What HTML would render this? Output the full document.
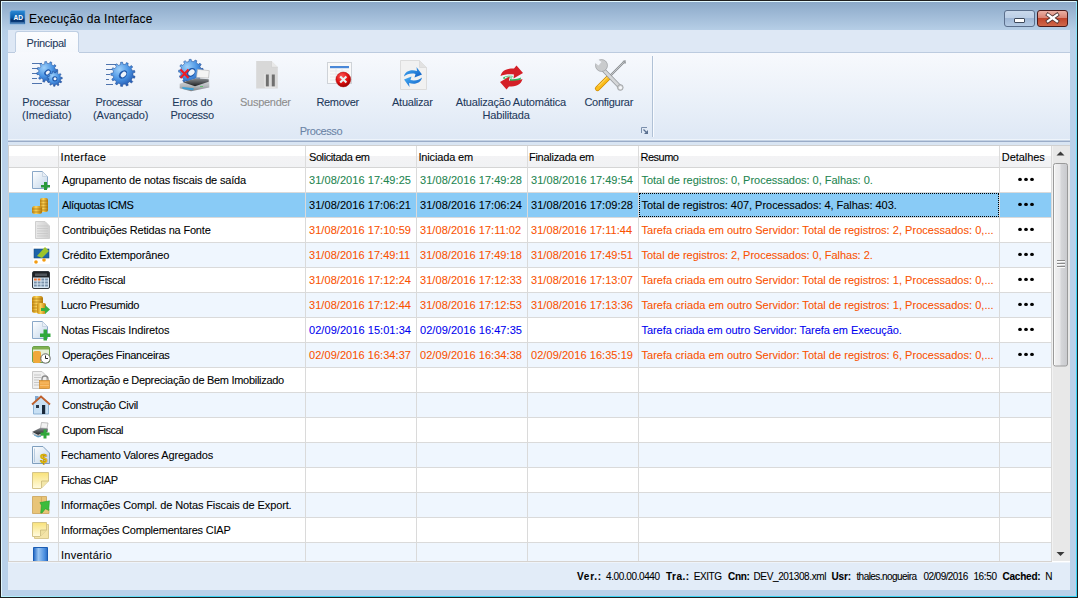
<!DOCTYPE html>
<html><head><meta charset="utf-8"><title>Execução da Interface</title>
<style>
*{margin:0;padding:0;box-sizing:border-box}
html,body{width:1078px;height:598px;overflow:hidden;background:#b9d1ea}
body{position:relative;font-family:"Liberation Sans",sans-serif;font-size:11px;color:#000}
.a{position:absolute}
.t{position:absolute;white-space:nowrap;line-height:13px;-webkit-text-stroke:0.08px currentColor}
svg.ov{position:absolute;left:0;top:0}
</style></head><body>
<div class="a" style="left:0px;top:0px;width:1078px;height:598px;background:#1f1f1f"></div>
<div class="a" style="left:1px;top:1px;width:1076px;height:596px;background:#e2f8ff"></div>
<div class="a" style="left:1076px;top:1px;width:1px;height:596px;background:linear-gradient(#8fe6fb,#38d4f4 300px)"></div>
<div class="a" style="left:1px;top:596px;width:1076px;height:1px;background:linear-gradient(90deg,#b8f4ff,#3ad2f2 200px)"></div>
<div class="a" style="left:2px;top:2px;width:1074px;height:594px;background:linear-gradient(#8ca9c9 0px,#b6cee6 28px,#b9d1ea 40px,#b9d1ea 598px)"></div>
<div class="t" style="left:29px;top:13px;letter-spacing:0.2px;font-size:12px;color:#000">Execução da Interface</div>
<div class="a" style="left:1004px;top:10px;width:31px;height:17px;border:1px solid #5b6f8c;border-radius:3px;background:linear-gradient(#c9d9ec 0,#bccfe6 45%,#9fb7d6 50%,#b4cae3 100%)"></div>
<div class="a" style="left:1014px;top:18px;width:11px;height:5px;background:#fff;border:1px solid #3e4a5c;border-radius:1px"></div>
<div class="a" style="left:1037px;top:10px;width:31px;height:17px;border:1px solid #4a1a1a;border-radius:3px;background:linear-gradient(#eab0a4 0,#d98474 45%,#c0452c 50%,#d0684a 100%)"></div>
<div class="a" style="left:8px;top:30px;width:1062px;height:22px;background:#dee8f5"></div>
<div class="a" style="left:15px;top:31px;width:64px;height:22px;background:linear-gradient(#fbfcfe,#f5f8fc);border:1px solid #bfcfe3;border-bottom:none;border-radius:3px 3px 0 0"></div>
<div class="t" style="left:26.5px;top:37px;letter-spacing:-0.312px;color:#1e395b">Principal</div>
<div class="a" style="left:8px;top:52px;width:1062px;height:88px;background:linear-gradient(#f7f9fd 0%,#eef3fa 40%,#dee8f5 100%)"></div>
<div class="a" style="left:8px;top:52px;width:7px;height:1px;background:#bccbdf"></div>
<div class="a" style="left:79px;top:52px;width:991px;height:1px;background:#bccbdf"></div>
<div class="a" style="left:8px;top:139px;width:1062px;height:1px;background:#eef4fb"></div>
<div class="a" style="left:8px;top:140px;width:1062px;height:1px;background:#c4d2e4"></div>
<div class="a" style="left:8px;top:141px;width:1062px;height:1px;background:#9aacc8"></div>
<div class="a" style="left:8px;top:142px;width:1062px;height:3px;background:#d9e5f3"></div>
<div class="a" style="left:652px;top:56px;width:1px;height:81px;background:#b0c1d6"></div>
<div class="a" style="left:653px;top:56px;width:1px;height:81px;background:#f8fbff"></div>
<div class="t" style="left:22.3px;top:96px;letter-spacing:-0.25px;color:#1e395b">Processar</div>
<div class="t" style="left:22.1px;top:109px;letter-spacing:0.0px;color:#1e395b">(Imediato)</div>
<div class="t" style="left:95.6px;top:96px;letter-spacing:-0.325px;color:#1e395b">Processar</div>
<div class="t" style="left:93px;top:109px;letter-spacing:-0.067px;color:#1e395b">(Avançado)</div>
<div class="t" style="left:172.3px;top:96px;letter-spacing:-0.186px;color:#1e395b">Erros do</div>
<div class="t" style="left:170.5px;top:109px;letter-spacing:-0.329px;color:#1e395b">Processo</div>
<div class="t" style="left:240px;top:96px;letter-spacing:-0.275px;color:#8d8d8d">Suspender</div>
<div class="t" style="left:316.4px;top:96px;letter-spacing:-0.3px;color:#1e395b">Remover</div>
<div class="t" style="left:392px;top:96px;letter-spacing:-0.25px;color:#1e395b">Atualizar</div>
<div class="t" style="left:455.8px;top:96px;letter-spacing:-0.19px;color:#1e395b">Atualização Automática</div>
<div class="t" style="left:482.5px;top:109px;letter-spacing:-0.178px;color:#1e395b">Habilitada</div>
<div class="t" style="left:584.4px;top:96px;letter-spacing:-0.267px;color:#1e395b">Configurar</div>
<div class="t" style="left:299.7px;top:125px;letter-spacing:-0.429px;color:#6b84a6">Processo</div>
<div class="a" style="left:8px;top:145px;width:1062px;height:417px;background:#fff"></div>
<div class="a" style="left:8px;top:145px;width:1062px;height:1px;background:#d0d0d0"></div>
<div class="a" style="left:8px;top:145px;width:1px;height:417px;background:#d0d0d0"></div>
<div class="a" style="left:9px;top:146px;width:1043px;height:21px;background:linear-gradient(#ffffff 0,#ffffff 10px,#f3f3f5 10px,#f1f2f4 21px)"></div>
<div class="a" style="left:9px;top:167px;width:1043px;height:1px;background:#d5d5d5"></div>
<div class="a" style="left:58px;top:146px;width:1px;height:21px;background:#dcdcdc"></div>
<div class="t" style="left:60.5px;top:151px;letter-spacing:0.325px;">Interface</div>
<div class="a" style="left:305px;top:146px;width:1px;height:21px;background:#dcdcdc"></div>
<div class="t" style="left:309px;top:151px;letter-spacing:-0.417px;">Solicitada em</div>
<div class="a" style="left:416px;top:146px;width:1px;height:21px;background:#dcdcdc"></div>
<div class="t" style="left:418.4px;top:151px;letter-spacing:-0.14px;">Iniciada em</div>
<div class="a" style="left:527px;top:146px;width:1px;height:21px;background:#dcdcdc"></div>
<div class="t" style="left:529px;top:151px;letter-spacing:-0.275px;">Finalizada em</div>
<div class="a" style="left:638px;top:146px;width:1px;height:21px;background:#dcdcdc"></div>
<div class="t" style="left:640.6px;top:151px;letter-spacing:-0.52px;">Resumo</div>
<div class="a" style="left:999px;top:146px;width:1px;height:21px;background:#dcdcdc"></div>
<div class="t" style="left:1001.8px;top:151px;letter-spacing:-0.057px;">Detalhes</div>
<div class="a" style="left:9px;top:168px;width:1042px;height:24px;background:#ffffff"></div>
<div class="a" style="left:9px;top:192px;width:1042px;height:1px;background:#dadada"></div>
<div class="t" style="left:62px;top:174px;letter-spacing:-0.167px;">Agrupamento de notas fiscais de saída</div>
<div class="t" style="left:309px;top:174px;letter-spacing:0.056px;color:#238550">31/08/2016 17:49:25</div>
<div class="t" style="left:420px;top:174px;letter-spacing:0.056px;color:#238550">31/08/2016 17:49:28</div>
<div class="t" style="left:531px;top:174px;letter-spacing:0.056px;color:#238550">31/08/2016 17:49:54</div>
<div class="t" style="left:641.5px;top:174px;letter-spacing:-0.021px;color:#238550">Total de registros: 0, Processados: 0, Falhas: 0.</div>
<div class="a" style="left:9px;top:193px;width:1042px;height:24px;background:#89cbf6"></div>
<div class="a" style="left:9px;top:217px;width:1042px;height:1px;background:#dadada"></div>
<div class="t" style="left:62px;top:199px;letter-spacing:-0.346px;">Alíquotas ICMS</div>
<div class="t" style="left:309px;top:199px;letter-spacing:0.056px;color:#000">31/08/2016 17:06:21</div>
<div class="t" style="left:420px;top:199px;letter-spacing:0.056px;color:#000">31/08/2016 17:06:24</div>
<div class="t" style="left:531px;top:199px;letter-spacing:0.056px;color:#000">31/08/2016 17:09:28</div>
<div class="t" style="left:641.5px;top:199px;letter-spacing:-0.029px;color:#000">Total de registros: 407, Processados: 4, Falhas: 403.</div>
<div class="a" style="left:9px;top:218px;width:1042px;height:24px;background:#ffffff"></div>
<div class="a" style="left:9px;top:242px;width:1042px;height:1px;background:#dadada"></div>
<div class="t" style="left:62px;top:224px;letter-spacing:-0.183px;">Contribuições Retidas na Fonte</div>
<div class="t" style="left:309px;top:224px;letter-spacing:0.056px;color:#fa5200">31/08/2016 17:10:59</div>
<div class="t" style="left:420px;top:224px;letter-spacing:0.056px;color:#fa5200">31/08/2016 17:11:02</div>
<div class="t" style="left:531px;top:224px;letter-spacing:0.056px;color:#fa5200">31/08/2016 17:11:44</div>
<div class="t" style="left:641.5px;top:224px;letter-spacing:0.027px;color:#fa5200">Tarefa criada em outro Servidor: Total de registros: 2, Processados: 0,...</div>
<div class="a" style="left:9px;top:243px;width:1042px;height:24px;background:#eff6fe"></div>
<div class="a" style="left:9px;top:267px;width:1042px;height:1px;background:#dadada"></div>
<div class="t" style="left:62px;top:249px;letter-spacing:-0.147px;">Crédito Extemporâneo</div>
<div class="t" style="left:309px;top:249px;letter-spacing:0.056px;color:#fa5200">31/08/2016 17:49:11</div>
<div class="t" style="left:420px;top:249px;letter-spacing:0.056px;color:#fa5200">31/08/2016 17:49:18</div>
<div class="t" style="left:531px;top:249px;letter-spacing:0.056px;color:#fa5200">31/08/2016 17:49:51</div>
<div class="t" style="left:641.5px;top:249px;letter-spacing:-0.021px;color:#fa5200">Total de registros: 2, Processados: 0, Falhas: 2.</div>
<div class="a" style="left:9px;top:268px;width:1042px;height:24px;background:#ffffff"></div>
<div class="a" style="left:9px;top:292px;width:1042px;height:1px;background:#dadada"></div>
<div class="t" style="left:62px;top:274px;letter-spacing:-0.285px;">Crédito Fiscal</div>
<div class="t" style="left:309px;top:274px;letter-spacing:0.056px;color:#fa5200">31/08/2016 17:12:24</div>
<div class="t" style="left:420px;top:274px;letter-spacing:0.056px;color:#fa5200">31/08/2016 17:12:33</div>
<div class="t" style="left:531px;top:274px;letter-spacing:0.056px;color:#fa5200">31/08/2016 17:13:07</div>
<div class="t" style="left:641.5px;top:274px;letter-spacing:0.027px;color:#fa5200">Tarefa criada em outro Servidor: Total de registros: 1, Processados: 0,...</div>
<div class="a" style="left:9px;top:293px;width:1042px;height:24px;background:#eff6fe"></div>
<div class="a" style="left:9px;top:317px;width:1042px;height:1px;background:#dadada"></div>
<div class="t" style="left:61px;top:299px;letter-spacing:-0.336px;">Lucro Presumido</div>
<div class="t" style="left:309px;top:299px;letter-spacing:0.056px;color:#fa5200">31/08/2016 17:12:44</div>
<div class="t" style="left:420px;top:299px;letter-spacing:0.056px;color:#fa5200">31/08/2016 17:12:53</div>
<div class="t" style="left:531px;top:299px;letter-spacing:0.056px;color:#fa5200">31/08/2016 17:13:36</div>
<div class="t" style="left:641.5px;top:299px;letter-spacing:0.027px;color:#fa5200">Tarefa criada em outro Servidor: Total de registros: 1, Processados: 0,...</div>
<div class="a" style="left:9px;top:318px;width:1042px;height:24px;background:#ffffff"></div>
<div class="a" style="left:9px;top:342px;width:1042px;height:1px;background:#dadada"></div>
<div class="t" style="left:61px;top:324px;letter-spacing:-0.127px;">Notas Fiscais Indiretos</div>
<div class="t" style="left:309px;top:324px;letter-spacing:0.056px;color:#0000f0">02/09/2016 15:01:34</div>
<div class="t" style="left:420px;top:324px;letter-spacing:0.056px;color:#0000f0">02/09/2016 16:47:35</div>
<div class="t" style="left:641.5px;top:324px;letter-spacing:-0.059px;color:#0000f0">Tarefa criada em outro Servidor: Tarefa em Execução.</div>
<div class="a" style="left:9px;top:343px;width:1042px;height:24px;background:#eff6fe"></div>
<div class="a" style="left:9px;top:367px;width:1042px;height:1px;background:#dadada"></div>
<div class="t" style="left:62px;top:349px;letter-spacing:-0.3px;">Operações Financeiras</div>
<div class="t" style="left:309px;top:349px;letter-spacing:0.056px;color:#fa5200">02/09/2016 16:34:37</div>
<div class="t" style="left:420px;top:349px;letter-spacing:0.056px;color:#fa5200">02/09/2016 16:34:38</div>
<div class="t" style="left:531px;top:349px;letter-spacing:0.056px;color:#fa5200">02/09/2016 16:35:19</div>
<div class="t" style="left:641.5px;top:349px;letter-spacing:0.027px;color:#fa5200">Tarefa criada em outro Servidor: Total de registros: 6, Processados: 0,...</div>
<div class="a" style="left:9px;top:368px;width:1042px;height:24px;background:#ffffff"></div>
<div class="a" style="left:9px;top:392px;width:1042px;height:1px;background:#dadada"></div>
<div class="t" style="left:62px;top:374px;letter-spacing:-0.293px;">Amortização e Depreciação de Bem Imobilizado</div>
<div class="a" style="left:9px;top:393px;width:1042px;height:24px;background:#eff6fe"></div>
<div class="a" style="left:9px;top:417px;width:1042px;height:1px;background:#dadada"></div>
<div class="t" style="left:62px;top:399px;letter-spacing:-0.253px;">Construção Civil</div>
<div class="a" style="left:9px;top:418px;width:1042px;height:24px;background:#ffffff"></div>
<div class="a" style="left:9px;top:442px;width:1042px;height:1px;background:#dadada"></div>
<div class="t" style="left:62px;top:424px;letter-spacing:-0.518px;">Cupom Fiscal</div>
<div class="a" style="left:9px;top:443px;width:1042px;height:24px;background:#eff6fe"></div>
<div class="a" style="left:9px;top:467px;width:1042px;height:1px;background:#dadada"></div>
<div class="t" style="left:61px;top:449px;letter-spacing:-0.152px;">Fechamento Valores Agregados</div>
<div class="a" style="left:9px;top:468px;width:1042px;height:24px;background:#ffffff"></div>
<div class="a" style="left:9px;top:492px;width:1042px;height:1px;background:#dadada"></div>
<div class="t" style="left:61px;top:474px;letter-spacing:-0.41px;">Fichas CIAP</div>
<div class="a" style="left:9px;top:493px;width:1042px;height:24px;background:#eff6fe"></div>
<div class="a" style="left:9px;top:517px;width:1042px;height:1px;background:#dadada"></div>
<div class="t" style="left:61px;top:499px;letter-spacing:-0.118px;">Informações Compl. de Notas Fiscais de Export.</div>
<div class="a" style="left:9px;top:518px;width:1042px;height:24px;background:#ffffff"></div>
<div class="a" style="left:9px;top:542px;width:1042px;height:1px;background:#dadada"></div>
<div class="t" style="left:61px;top:524px;letter-spacing:-0.21px;">Informações Complementares CIAP</div>
<div class="a" style="left:9px;top:543px;width:1042px;height:18px;background:#eff6fe"></div>
<div class="t" style="left:61px;top:549px;letter-spacing:0.278px;">Inventário</div>
<div class="a" style="left:58px;top:167px;width:1px;height:394px;background:#dadada"></div>
<div class="a" style="left:305px;top:167px;width:1px;height:394px;background:#dadada"></div>
<div class="a" style="left:416px;top:167px;width:1px;height:394px;background:#dadada"></div>
<div class="a" style="left:527px;top:167px;width:1px;height:394px;background:#dadada"></div>
<div class="a" style="left:638px;top:167px;width:1px;height:394px;background:#dadada"></div>
<div class="a" style="left:999px;top:167px;width:1px;height:394px;background:#dadada"></div>
<div class="a" style="left:1051px;top:146px;width:1px;height:415px;background:#dadada"></div>
<div class="a" style="left:639px;top:193px;width:360px;height:24px;border:1px dotted #000"></div>
<div class="a" style="left:8px;top:561px;width:1044px;height:1px;background:#d6d2ce"></div>
<div class="a" style="left:8px;top:562px;width:1062px;height:28px;background:#e2ecf8"></div>
<div class="a" style="left:8px;top:562px;width:1062px;height:1px;background:#eef4fb"></div>
<div class="t" style="left:577px;top:570px;letter-spacing:0.75px;font-size:10px;font-weight:bold;">Ver.:</div>
<div class="t" style="left:606px;top:570px;letter-spacing:-0.391px;font-size:10px;">4.00.00.0440</div>
<div class="t" style="left:666px;top:570px;letter-spacing:0.5px;font-size:10px;font-weight:bold;">Tra.:</div>
<div class="t" style="left:693.7px;top:570px;letter-spacing:-0.425px;font-size:10px;">EXITG</div>
<div class="t" style="left:728px;top:570px;letter-spacing:-0.333px;font-size:10px;font-weight:bold;">Cnn:</div>
<div class="t" style="left:753.5px;top:570px;letter-spacing:-0.369px;font-size:10px;">DEV_201308.xml</div>
<div class="t" style="left:831.5px;top:570px;letter-spacing:-0.167px;font-size:10px;font-weight:bold;">Usr:</div>
<div class="t" style="left:856.4px;top:570px;letter-spacing:-0.55px;font-size:10px;">thales.nogueira</div>
<div class="t" style="left:923.4px;top:570px;letter-spacing:-0.556px;font-size:10px;">02/09/2016</div>
<div class="t" style="left:973.4px;top:570px;letter-spacing:-0.35px;font-size:10px;">16:50</div>
<div class="t" style="left:1002.4px;top:570px;letter-spacing:-0.2px;font-size:10px;font-weight:bold;">Cached:</div>
<div class="t" style="left:1045.2px;top:570px;letter-spacing:0.4px;font-size:10px;">N</div>
<svg class="ov" width="1078" height="598" viewBox="0 0 1078 598">
<defs>
<radialGradient id="gb" cx=".35" cy=".3" r=".8"><stop offset="0" stop-color="#9ed0fa"/><stop offset=".5" stop-color="#4a94e4"/><stop offset="1" stop-color="#1c4ca4"/></radialGradient>
<linearGradient id="prn" x1="0" y1="0" x2="0" y2="1"><stop offset="0" stop-color="#5a5e62"/><stop offset=".45" stop-color="#1f2225"/><stop offset=".5" stop-color="#c9cdd0"/><stop offset="1" stop-color="#8d9296"/></linearGradient>
<radialGradient id="redc" cx=".4" cy=".3" r=".7"><stop offset="0" stop-color="#ff5a5a"/><stop offset=".6" stop-color="#e01010"/><stop offset="1" stop-color="#9a0000"/></radialGradient>
<linearGradient id="blu" x1="0" y1="0" x2="1" y2="1"><stop offset="0" stop-color="#4ab0f5"/><stop offset="1" stop-color="#0c5cc4"/></linearGradient>
<linearGradient id="docg" x1="0" y1="0" x2="1" y2="1"><stop offset="0" stop-color="#ffffff"/><stop offset="1" stop-color="#c2d6ea"/></linearGradient>
<linearGradient id="bookg" x1="0" y1="0" x2="1" y2="0"><stop offset="0" stop-color="#1f66c4"/><stop offset=".35" stop-color="#9cc6f2"/><stop offset=".8" stop-color="#4a8ee0"/><stop offset="1" stop-color="#2a6ac0"/></linearGradient>
<linearGradient id="coin" x1="0" y1="0" x2="1" y2="0"><stop offset="0" stop-color="#c88a10"/><stop offset=".4" stop-color="#fbd45a"/><stop offset="1" stop-color="#b87a08"/></linearGradient>
<linearGradient id="note" x1="0" y1="0" x2="0" y2="1"><stop offset="0" stop-color="#f9e27a"/><stop offset="1" stop-color="#fffbe0"/></linearGradient>
<linearGradient id="shd" x1="0" y1="0" x2="1" y2="0"><stop offset="0" stop-color="#e9e9e9"/><stop offset="1" stop-color="#cfcfcf"/></linearGradient>
<linearGradient id="thumb" x1="0" y1="0" x2="1" y2="0"><stop offset="0" stop-color="#f2f2f2"/><stop offset=".48" stop-color="#e8e8ea"/><stop offset=".52" stop-color="#d6d7da"/><stop offset="1" stop-color="#c8c9cd"/></linearGradient>
<linearGradient id="prtop" x1="0" y1="0" x2="0" y2="1"><stop offset="0" stop-color="#8a8e92"/><stop offset="1" stop-color="#1c1e20"/></linearGradient>
<linearGradient id="prbase" x1="0" y1="0" x2="0" y2="1"><stop offset="0" stop-color="#e4e6e8"/><stop offset=".6" stop-color="#b4b8bc"/><stop offset="1" stop-color="#7c8084"/></linearGradient>
</defs>
<clipPath id="gridclip"><rect x="9" y="168" width="1042" height="393"/></clipPath>
<defs><linearGradient id="adg" x1="0" y1="0" x2="0" y2="1"><stop offset="0" stop-color="#2a8ad6"/><stop offset=".55" stop-color="#0a5aa8"/><stop offset=".7" stop-color="#05306a"/><stop offset="1" stop-color="#0a4a90"/></linearGradient></defs>
<path d="M11.5 10.5H25V24H10V12Z" fill="url(#adg)" stroke="#6aa8e0" stroke-width=".6"/>
<text x="13.5" y="20" font-family="Liberation Sans" font-weight="bold" font-size="7.5" textLength="9.5" lengthAdjust="spacingAndGlyphs" fill="#fff">AD</text>
<path d="M10.5 23H24" stroke="#8ab4dc" stroke-width=".8"/>
<path d="M1048 14.8L1057 21.2M1057 14.8L1048 21.2" stroke="#4a3030" stroke-width="3.9" stroke-linecap="square"/>
<path d="M1048 14.8L1057 21.2M1057 14.8L1048 21.2" stroke="#fff" stroke-width="2.4" stroke-linecap="square"/>
<path d="M32 63.5H42" stroke="#4f74ae" stroke-width="1"/>
<path d="M32 68.5H38" stroke="#4f74ae" stroke-width="1"/>
<path d="M32 73.5H37" stroke="#4f74ae" stroke-width="1"/>
<path d="M32 78.5H37" stroke="#4f74ae" stroke-width="1"/>
<path d="M32 83.5H42" stroke="#4f74ae" stroke-width="1"/>
<path d="M55.86 72.86 L55.67 73.97 L57.51 74.86 L56.84 76.62 L54.88 76.07 L54.28 77.02 L53.57 77.89 L54.71 79.58 L53.25 80.77 L51.83 79.31 L50.83 79.84 L49.78 80.23 L49.93 82.27 L48.07 82.57 L47.57 80.60 L46.44 80.56 L45.33 80.37 L44.44 82.21 L42.68 81.54 L43.23 79.58 L42.28 78.98 L41.41 78.27 L39.72 79.41 L38.53 77.95 L39.99 76.53 L39.46 75.53 L39.07 74.48 L37.03 74.63 L36.73 72.77 L38.70 72.27 L38.74 71.14 L38.93 70.03 L37.09 69.14 L37.76 67.38 L39.72 67.93 L40.32 66.98 L41.03 66.11 L39.89 64.42 L41.35 63.23 L42.77 64.69 L43.77 64.16 L44.82 63.77 L44.67 61.73 L46.53 61.43 L47.03 63.40 L48.16 63.44 L49.27 63.63 L50.16 61.79 L51.92 62.46 L51.37 64.42 L52.32 65.02 L53.19 65.73 L54.88 64.59 L56.07 66.05 L54.61 67.47 L55.14 68.47 L55.53 69.52 L57.57 69.37 L57.87 71.23 L55.90 71.73Z" fill="url(#gb)" stroke="#1b4690" stroke-width=".5"/>
<ellipse cx="47.5" cy="72.5" rx="3.6" ry="2.6" fill="#1d55a8" transform="rotate(-40 47.5 72.5)"/>
<ellipse cx="47.8" cy="72.5" rx="2.4" ry="1.6" fill="#eef4fb" transform="rotate(-40 47.8 72.5)"/>
<path d="M60.58 79.89 L60.35 80.72 L61.73 81.58 L61.05 82.88 L59.55 82.23 L59.00 82.88 L58.36 83.45 L59.06 84.92 L57.78 85.65 L56.88 84.29 L56.06 84.54 L55.21 84.68 L55.00 86.29 L53.53 86.21 L53.51 84.58 L52.68 84.35 L51.90 84.01 L50.85 85.25 L49.66 84.39 L50.52 83.00 L49.95 82.36 L49.48 81.65 L47.92 82.13 L47.38 80.76 L48.86 80.06 L48.72 79.21 L48.71 78.36 L47.14 77.92 L47.43 76.48 L49.05 76.68 L49.39 75.90 L49.85 75.17 L48.76 73.96 L49.79 72.90 L51.04 73.95 L51.75 73.48 L52.52 73.11 L52.27 71.50 L53.71 71.17 L54.19 72.72 L55.04 72.71 L55.89 72.82 L56.55 71.33 L57.94 71.82 L57.50 73.39 L58.23 73.85 L58.88 74.40 L60.24 73.50 L61.14 74.66 L59.92 75.75 L60.29 76.52 L60.54 77.34 L62.17 77.32 L62.30 78.79 L60.69 79.04Z" fill="url(#gb)" stroke="#1b4690" stroke-width=".5"/>
<circle cx="54.8" cy="78.8" r="2.6" fill="#1d55a8"/><circle cx="55" cy="78.8" r="1.5" fill="#eef4fb"/>
<path d="M106 64.5H117" stroke="#4f74ae" stroke-width="1"/>
<path d="M106 69.5H113" stroke="#4f74ae" stroke-width="1"/>
<path d="M106 74.5H110" stroke="#4f74ae" stroke-width="1"/>
<path d="M106 79.5H109" stroke="#4f74ae" stroke-width="1"/>
<path d="M106 84.5H113" stroke="#4f74ae" stroke-width="1"/>
<path d="M133.00 74.30 L132.93 75.51 L135.05 76.24 L134.57 78.18 L132.35 77.85 L131.85 78.95 L131.23 79.98 L132.76 81.61 L131.44 83.11 L129.63 81.79 L128.68 82.53 L127.65 83.15 L128.25 85.31 L126.38 86.02 L125.39 84.01 L124.21 84.23 L123.00 84.30 L122.53 86.49 L120.54 86.25 L120.61 84.01 L119.45 83.65 L118.35 83.15 L116.92 84.88 L115.27 83.74 L116.37 81.79 L115.51 80.93 L114.77 79.98 L112.70 80.84 L111.77 79.06 L113.65 77.85 L113.29 76.69 L113.07 75.51 L110.84 75.30 L110.84 73.30 L113.07 73.09 L113.29 71.91 L113.65 70.75 L111.77 69.54 L112.70 67.76 L114.77 68.62 L115.51 67.67 L116.37 66.81 L115.27 64.86 L116.92 63.72 L118.35 65.45 L119.45 64.95 L120.61 64.59 L120.54 62.35 L122.53 62.11 L123.00 64.30 L124.21 64.37 L125.39 64.59 L126.38 62.58 L128.25 63.29 L127.65 65.45 L128.68 66.07 L129.63 66.81 L131.44 65.49 L132.76 66.99 L131.23 68.62 L131.85 69.65 L132.35 70.75 L134.57 70.42 L135.05 72.36 L132.93 73.09Z" fill="url(#gb)" stroke="#1b4690" stroke-width=".5"/>
<ellipse cx="123" cy="74.5" rx="4.8" ry="3.4" fill="#1d55a8" transform="rotate(-45 123 74.5)"/>
<ellipse cx="123.5" cy="74.5" rx="3.2" ry="2.2" fill="#eef4fb" transform="rotate(-45 123.5 74.5)"/>
<path d="M201.39 72.22 L201.25 73.47 L203.13 74.28 L202.54 76.23 L200.53 75.87 L199.96 76.99 L199.25 78.03 L200.54 79.62 L199.12 81.07 L197.50 79.82 L196.47 80.54 L195.37 81.14 L195.77 83.15 L193.83 83.77 L192.98 81.91 L191.74 82.07 L190.48 82.09 L189.90 84.05 L187.90 83.71 L188.01 81.66 L186.83 81.23 L185.71 80.66 L184.29 82.13 L182.67 80.89 L183.72 79.13 L182.88 78.20 L182.16 77.17 L180.21 77.81 L179.36 75.97 L181.10 74.90 L180.79 73.68 L180.63 72.44 L178.61 72.10 L178.71 70.07 L180.75 69.93 L181.04 68.71 L181.47 67.53 L179.84 66.29 L180.88 64.54 L182.75 65.37 L183.57 64.42 L184.50 63.58 L183.63 61.73 L185.36 60.66 L186.63 62.26 L187.80 61.80 L189.02 61.49 L189.11 59.44 L191.14 59.30 L191.52 61.31 L192.77 61.45 L193.99 61.74 L195.02 59.97 L196.89 60.79 L196.29 62.74 L197.33 63.45 L198.28 64.27 L200.01 63.18 L201.28 64.77 L199.84 66.23 L200.44 67.33 L200.90 68.50 L202.94 68.35 L203.33 70.34 L201.37 70.96Z" fill="url(#gb)" stroke="#1b4690" stroke-width=".5"/>
<ellipse cx="191" cy="72.5" rx="5.2" ry="3.8" fill="#1d55a8" transform="rotate(-45 191 72.5)"/>
<ellipse cx="191.5" cy="72.5" rx="3.6" ry="2.6" fill="#eef4fb" transform="rotate(-45 191.5 72.5)"/>
<path d="M197.5 69.3L209.3 70.7L208.5 78L196.5 77.5Z" fill="#f4f4f4" stroke="#b0b0b0" stroke-width=".6"/>
<path d="M179.7 83.7L196 78.5L209.3 79.5V87.5L191 91.3L179.7 88.3Z" fill="url(#prbase)"/>
<path d="M183 82.3L196.3 78.3L208.7 79.3V81.7L195 86.3Z" fill="url(#prtop)"/>
<path d="M182 87L194 88.3L193 90.3L183 89Z" fill="#3aa0d8"/>
<path d="M200 86.5h3" stroke="#50c060" stroke-width=".8"/>
<path d="M180.5 69.5L188.5 78M188.5 69.5L180.5 78" stroke="#ee1c25" stroke-width="2.2"/>
<path d="M256.2 61H271.5L277.8 67.3V88.5H256.2Z" fill="#d8d8d8"/>
<path d="M271.5 61V67.3H277.8" fill="#e9e9e9" stroke="#cdcdcd" stroke-width=".6"/>
<rect x="265.8" y="74.5" width="3" height="12" fill="#6f6f6f"/><rect x="271.8" y="74.5" width="3" height="12" fill="#6f6f6f"/>
<path d="M265 74v13.2h10.5" stroke="#f2f2f2" stroke-width=".8" fill="none"/>
<rect x="327.5" y="62.5" width="24" height="21" fill="#f9f9f9" stroke="#cfd3d8"/>
<rect x="330" y="66" width="19" height="2.2" fill="#4a88d8"/>
<path d="M330 71h19M330 74h19M330 77h19M330 80h19M336 68v14M342 68v14" stroke="#e3e6ea" stroke-width=".8"/>
<circle cx="343.3" cy="79.5" r="7.4" fill="url(#redc)" stroke="#a80e0e" stroke-width=".5"/>
<path d="M340.2 76.4L346.4 82.6M346.4 76.4L340.2 82.6" stroke="#e8f4f4" stroke-width="2.1"/>
<path d="M400.5 60.5H419.5L426.5 67.5V89.5H400.5Z" fill="#f1f1f1" stroke="#dcdcdc"/>
<path d="M419.5 60.5V67.5H426.5" fill="#e2e2e2" stroke="#d4d4d4" stroke-width=".6"/>
<path d="M404 76.5C405 71 411 69 417 71L416.5 67L422 74.5L414.5 77.5L415.5 74C411 73 407 74 404 76.5Z" fill="url(#blu)"/>
<path d="M422 77.5C421 83 415 85 409 83L409.5 87L404 79.5L411.5 76.5L410.5 80C415 81 419 80 422 77.5Z" fill="url(#blu)"/>
<path d="M503 77.5C506 75.5 510 75.5 513 76L512 78.5C509 78 506 78 503.5 79Z" fill="#36c060"/>
<path d="M510 79C514 79.5 518 79 521 77.5L520.5 80C517 81.5 513 82 510 81.5Z" fill="#2cb858"/>
<path d="M505 77.5C508 76.8 511 76.8 513 77.2" stroke="#f4fff8" stroke-width="1" fill="none"/>
<path d="M500.5 76C502 70 507 68.5 514 68.5L516.5 65.5L523 73L513.5 78.5L514 74.5C509 74 504 74.5 500.5 76Z" fill="#d42028"/>
<path d="M522.5 79C521 85 516 86.5 509 86.5L506.5 89.5L500 82L509.5 76.5L509 80.5C514 81 519 80.5 522.5 79Z" fill="#d42028"/>
<path d="M624 62L610.5 75.5" stroke="#8a8e92" stroke-width="2.2" stroke-linecap="round"/>
<path d="M624 62L610.5 75.5" stroke="#c2c5c8" stroke-width="1" stroke-linecap="round"/>
<path d="M622.5 61L625.5 60L626 63L625 64Z" fill="#9a9ea2"/>
<path d="M609 77L597.5 88.5" stroke="#d08c00" stroke-width="5.2" stroke-linecap="round"/>
<path d="M609 77L597.5 88.5" stroke="#fbbd1c" stroke-width="3.6" stroke-linecap="round"/>
<path d="M608 76.5L598.5 86" stroke="#ffe080" stroke-width="1" stroke-linecap="round"/>
<path d="M604 70.5L619.5 86.5" stroke="#8e9296" stroke-width="4" stroke-linecap="round"/>
<path d="M604 70.5L619.5 86.5" stroke="#d4d6d8" stroke-width="2.8" stroke-linecap="round"/>
<circle cx="601.5" cy="65.5" r="6" fill="#c9cbcd" stroke="#8e9296" stroke-width=".6"/>
<path d="M594.5 62.5L598.5 65.5L601.5 62L597.5 59Z" fill="#f2f5fa"/>
<circle cx="620.3" cy="87.5" r="2.9" fill="#c9cbcd" stroke="#8e9296" stroke-width=".6"/><circle cx="620.5" cy="87.7" r="1.6" fill="#f5f7fa"/>
<path d="M641.5 133V127.5H647" fill="none" stroke="#7a8fac"/><path d="M643.5 129.5L646.5 132.5" stroke="#5a7090" stroke-width="1.2"/><path d="M644 134H648V130Z" fill="#5a7090"/>
<g clip-path="url(#gridclip)">
<path d="M32.5 171.5H42.5L47.5 176.5V188.5H32.5Z" fill="url(#docg)" stroke="#8aa8c8"/>
<path d="M42.5 171.5V176.5H47.5" fill="#e8eef5" stroke="#b5c6d8" stroke-width=".6"/>
<path d="M44 182H47V185H50V187.5H47V190H44V187.5H41V185H44Z" fill="#2a9a3a"/>
<ellipse cx="1020" cy="179.4" rx="1.9" ry="1.6" fill="#000"/>
<ellipse cx="1026" cy="179.4" rx="1.9" ry="1.6" fill="#000"/>
<ellipse cx="1032" cy="179.4" rx="1.9" ry="1.6" fill="#000"/>
<rect x="40" y="198" width="8" height="14" rx="2" fill="url(#coin)"/>
<path d="M40 201h8M40 204h8M40 207h8M40 210h8" stroke="#a8700a" stroke-width=".7"/>
<rect x="32" y="206" width="10" height="8" rx="2.5" fill="url(#coin)"/>
<path d="M32 209h10M32 212h10" stroke="#a8700a" stroke-width=".7"/>
<ellipse cx="1020" cy="204.4" rx="1.9" ry="1.6" fill="#000"/>
<ellipse cx="1026" cy="204.4" rx="1.9" ry="1.6" fill="#000"/>
<ellipse cx="1032" cy="204.4" rx="1.9" ry="1.6" fill="#000"/>
<path d="M35.5 221.5H45L49.5 226V238.5H35.5Z" fill="url(#shd)" stroke="#cfcfcf"/>
<path d="M37 226h11M37 228.5h11M37 231h11M37 233.5h11M37 236h11" stroke="#c4c4c4" stroke-width=".7"/>
<ellipse cx="1020" cy="229.4" rx="1.9" ry="1.6" fill="#000"/>
<ellipse cx="1026" cy="229.4" rx="1.9" ry="1.6" fill="#000"/>
<ellipse cx="1032" cy="229.4" rx="1.9" ry="1.6" fill="#000"/>
<rect x="33" y="246" width="17" height="18" fill="#fff"/>
<rect x="34" y="249" width="15" height="9" fill="#1e64a8" stroke="#164a80" stroke-width=".6"/>
<path d="M37 256L45 247L49 251L42 258Z" fill="#9cc42c"/>
<circle cx="36" cy="262" r="1.8" fill="#f39c12"/><circle cx="44" cy="260" r="1.8" fill="#f39c12"/>
<ellipse cx="1020" cy="254.4" rx="1.9" ry="1.6" fill="#000"/>
<ellipse cx="1026" cy="254.4" rx="1.9" ry="1.6" fill="#000"/>
<ellipse cx="1032" cy="254.4" rx="1.9" ry="1.6" fill="#000"/>
<rect x="32.5" y="271.5" width="17" height="17" rx="1.5" fill="#d8e8f4" stroke="#30363c"/>
<rect x="33" y="272" width="16" height="5.5" fill="#1e2226"/>
<rect x="35" y="273.5" width="12" height="2.5" fill="#50565c"/>
<rect x="34.0" y="278.5" width="2.8" height="2" fill="#f07030"/>
<rect x="34.0" y="281.5" width="2.8" height="2" fill="#7890a8"/>
<rect x="34.0" y="284.5" width="2.8" height="2" fill="#7890a8"/>
<rect x="37.7" y="278.5" width="2.8" height="2" fill="#f07030"/>
<rect x="37.7" y="281.5" width="2.8" height="2" fill="#7890a8"/>
<rect x="37.7" y="284.5" width="2.8" height="2" fill="#7890a8"/>
<rect x="41.4" y="278.5" width="2.8" height="2" fill="#7890a8"/>
<rect x="41.4" y="281.5" width="2.8" height="2" fill="#7890a8"/>
<rect x="41.4" y="284.5" width="2.8" height="2" fill="#7890a8"/>
<rect x="45.1" y="278.5" width="2.8" height="2" fill="#7890a8"/>
<rect x="45.1" y="281.5" width="2.8" height="2" fill="#7890a8"/>
<rect x="45.1" y="284.5" width="2.8" height="2" fill="#7890a8"/>
<ellipse cx="1020" cy="279.4" rx="1.9" ry="1.6" fill="#000"/>
<ellipse cx="1026" cy="279.4" rx="1.9" ry="1.6" fill="#000"/>
<ellipse cx="1032" cy="279.4" rx="1.9" ry="1.6" fill="#000"/>
<rect x="32" y="296" width="11" height="17" rx="2.5" fill="url(#coin)"/>
<path d="M32 299h11M32 302h11M32 305h11M32 308h11M32 311h11" stroke="#a8700a" stroke-width=".7"/>
<rect x="37" y="303" width="9" height="11" rx="2" fill="url(#coin)"/>
<path d="M41 308H45V305L50 309.5L45 314V311H41Z" fill="#38b040"/>
<ellipse cx="1020" cy="304.4" rx="1.9" ry="1.6" fill="#000"/>
<ellipse cx="1026" cy="304.4" rx="1.9" ry="1.6" fill="#000"/>
<ellipse cx="1032" cy="304.4" rx="1.9" ry="1.6" fill="#000"/>
<path d="M32.5 321.5H42.5L47.5 326.5V338.5H32.5Z" fill="url(#docg)" stroke="#8aa8c8"/>
<path d="M42.5 321.5V326.5H47.5" fill="#e8eef5" stroke="#b5c6d8" stroke-width=".6"/>
<path d="M43.5 329.5H47V333.5H50.5V337H47V340.5H43.5V337H40V333.5H43.5Z" fill="#30a83c"/>
<ellipse cx="1020" cy="329.4" rx="1.9" ry="1.6" fill="#000"/>
<ellipse cx="1026" cy="329.4" rx="1.9" ry="1.6" fill="#000"/>
<ellipse cx="1032" cy="329.4" rx="1.9" ry="1.6" fill="#000"/>
<rect x="32.5" y="346.5" width="17" height="16" rx="1.5" fill="#e6efd8" stroke="#6aa04a"/>
<rect x="33" y="347" width="16" height="2.5" fill="#80b050"/>
<rect x="33" y="351" width="8" height="12" rx="2" fill="#f0a83a"/>
<circle cx="45.5" cy="358.5" r="4.7" fill="#fff" stroke="#555" stroke-width=".9"/>
<path d="M45.5 355.5V358.5H48" stroke="#222" stroke-width="1" fill="none"/>
<ellipse cx="1020" cy="354.4" rx="1.9" ry="1.6" fill="#000"/>
<ellipse cx="1026" cy="354.4" rx="1.9" ry="1.6" fill="#000"/>
<ellipse cx="1032" cy="354.4" rx="1.9" ry="1.6" fill="#000"/>
<path d="M32.5 371.5H42L46.5 376V388.5H32.5Z" fill="#efefef" stroke="#c8c8c8"/>
<path d="M34 375h7M34 377.5h7M34 380h5M34 382.5h5M34 385h5" stroke="#b8b8b8" stroke-width=".7"/>
<path d="M42 381V379A3 3 0 0 1 48 379V381" fill="none" stroke="#8a8a8a" stroke-width="1.3"/>
<rect x="39.5" y="380.5" width="10" height="8" fill="#f0a848" stroke="#c88428" stroke-width=".7"/>
<path d="M40 383h9M40 385.5h9" stroke="#fcc880" stroke-width=".7"/>
<rect x="35" y="396" width="3.5" height="5" fill="#7fa8d0"/>
<path d="M33.5 403L41 397L48.5 403V414H33.5Z" fill="#c8e0f4" stroke="#7aa4cc" stroke-width=".8"/>
<path d="M32 404.5L41 396.5L50 404.5" fill="none" stroke="#c0602c" stroke-width="1.8"/>
<rect x="36" y="405" width="3" height="3" fill="#2a3848"/>
<rect x="42" y="405" width="3.2" height="9" fill="#18283a"/>
<path d="M41.5 422.5L48 423L47 428.5L40.5 428Z" fill="#f2f2f2" stroke="#9a9a9a" stroke-width=".6"/>
<path d="M32 432L40 428L48 428.5L47.5 432L38 435Z" fill="url(#prtop)"/>
<path d="M32 432L38 435L47.5 432L47 434.5L38 437L32 434Z" fill="url(#prbase)"/>
<path d="M34 435L38 437L41 436.3" stroke="#3a9ad0" stroke-width=".8" fill="none"/>
<path d="M43.5 429.5H46.5V432.5H49.5V435.5H46.5V438.5H43.5V435.5H40.5V432.5H43.5Z" fill="#30a83c"/>
<path d="M32.5 446.5H43L49.5 453V463.5H32.5Z" fill="url(#docg)" stroke="#7f9fbe"/>
<path d="M34.5 448.5V462" stroke="#a8c0d8" stroke-width=".8"/>
<text x="40.3" y="462.6" font-family="Liberation Sans" font-weight="bold" font-size="13" fill="#f4c800" stroke="#b08800" stroke-width=".5">$</text>
<path d="M32.5 472.5H48.5V481L41 488.5H32.5Z" fill="url(#note)" stroke="#d4c48a"/>
<path d="M48.5 481H41.5V488" fill="#f2e6a8" stroke="#c8b878" stroke-width=".8"/>
<path d="M32.5 496.5H46.5V509H49V513.5H32.5Z" fill="#e8c478" stroke="#caa258" stroke-width=".8"/>
<path d="M41.4 497V513" stroke="#c9a050" stroke-width=".7"/>
<path d="M49.5 500.8L39.9 502.6L41.4 505.4L40.7 513.1L42.1 513L45.4 508.7L48.75 510.5Z" fill="#3cbc3c" stroke="#1e9a28" stroke-width=".5"/>
<path d="M34.5 524.5H48.5V538.5H34.5Z" fill="#f4e4a8" stroke="#d8c890"/>
<path d="M32.5 522.5H46.5V530L40 536.5H32.5Z" fill="url(#note)" stroke="#d4c48a"/>
<path d="M46.5 530H40.5V536" fill="#efe0a0" stroke="#c8b878" stroke-width=".8"/>
<path d="M33.5 547.5H47.5V566H33.5Z" fill="url(#bookg)" stroke="#1a5cb4"/>
</g>
<rect x="1052" y="146" width="18" height="415" fill="#e8e8e8"/>
<path d="M1052.5 146V561" stroke="#f2f2f2"/>
<path d="M1056.5 155.5H1064.5L1060.5 151.5Z" fill="#3a3a3a"/>
<path d="M1056.5 552H1064.5L1060.5 556Z" fill="#3a3a3a"/>
<rect x="1053.5" y="163.5" width="14" height="202.5" rx="2" fill="url(#thumb)" stroke="#9a9a9a"/>
<path d="M1054.5 165V365" stroke="#fafafa"/>
<path d="M1057 260.5h8M1057 263.5h8M1057 266.5h8" stroke="#8a8a8a"/><path d="M1057 261.5h8M1057 264.5h8M1057 267.5h8" stroke="#fbfbfb"/>
</svg>
</body></html>
